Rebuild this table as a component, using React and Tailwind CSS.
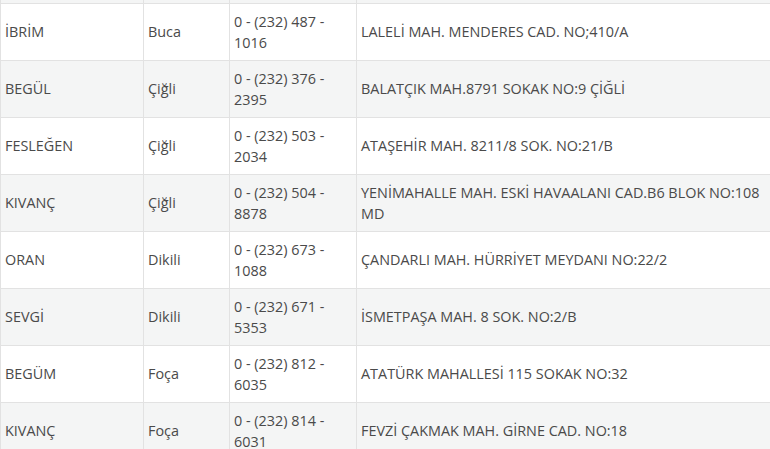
const rows = [
  ["İBRİM", "Buca", "0 - (232) 487 - 1016", "LALELİ MAH. MENDERES CAD. NO;410/A"],
  ["BEGÜL", "Çiğli", "0 - (232) 376 - 2395", "BALATÇIK MAH.8791 SOKAK NO:9 ÇİĞLİ"],
  ["FESLEĞEN", "Çiğli", "0 - (232) 503 - 2034", "ATAŞEHİR MAH. 8211/8 SOK. NO:21/B"],
  ["KIVANÇ", "Çiğli", "0 - (232) 504 - 8878", "YENİMAHALLE MAH. ESKİ HAVAALANI CAD.B6 BLOK NO:108 MD"],
  ["ORAN", "Dikili", "0 - (232) 673 - 1088", "ÇANDARLI MAH. HÜRRİYET MEYDANI NO:22/2"],
  ["SEVGİ", "Dikili", "0 - (232) 671 - 5353", "İSMETPAŞA MAH. 8 SOK. NO:2/B"],
  ["BEGÜM", "Foça", "0 - (232) 812 - 6035", "ATATÜRK MAHALLESİ 115 SOKAK NO:32"],
  ["KIVANÇ", "Foça", "0 - (232) 814 - 6031", "FEVZİ ÇAKMAK MAH. GİRNE CAD. NO:18"],
];

export default function App() {
  return (
    <div className="h-[449px] w-[770px] overflow-hidden bg-white font-['Open_Sans',sans-serif] text-[14.4px] leading-[21px] text-[#4a4a4a]">
      <table className="w-[772px] table-fixed border-collapse">
        <colgroup>
          <col className="w-[143px]" />
          <col className="w-[86px]" />
          <col className="w-[127px]" />
          <col />
        </colgroup>
        <tbody>
          {/* the row above, scrolled out of view */}
          <tr className="h-[3px] bg-[#f4f5f5]">
            <td className="border-x border-b border-[#e2e2e2] p-0" />
            <td className="border-x border-b border-[#e2e2e2] p-0" />
            <td className="border-x border-b border-[#e2e2e2] p-0" />
            <td className="border-x border-b border-[#e2e2e2] p-0" />
          </tr>
          {rows.map((r, i) => (
            <tr
              key={i}
              className={`h-[57px] ${i % 2 === 1 ? "bg-[#f4f5f5]" : "bg-white"}`}
            >
              {r.map((c, j) => (
                <td
                  key={j}
                  className="border border-[#e2e2e2] px-[4px] py-[7px] align-middle"
                >
                  {c}
                </td>
              ))}
            </tr>
          ))}
        </tbody>
      </table>
    </div>
  );
}
